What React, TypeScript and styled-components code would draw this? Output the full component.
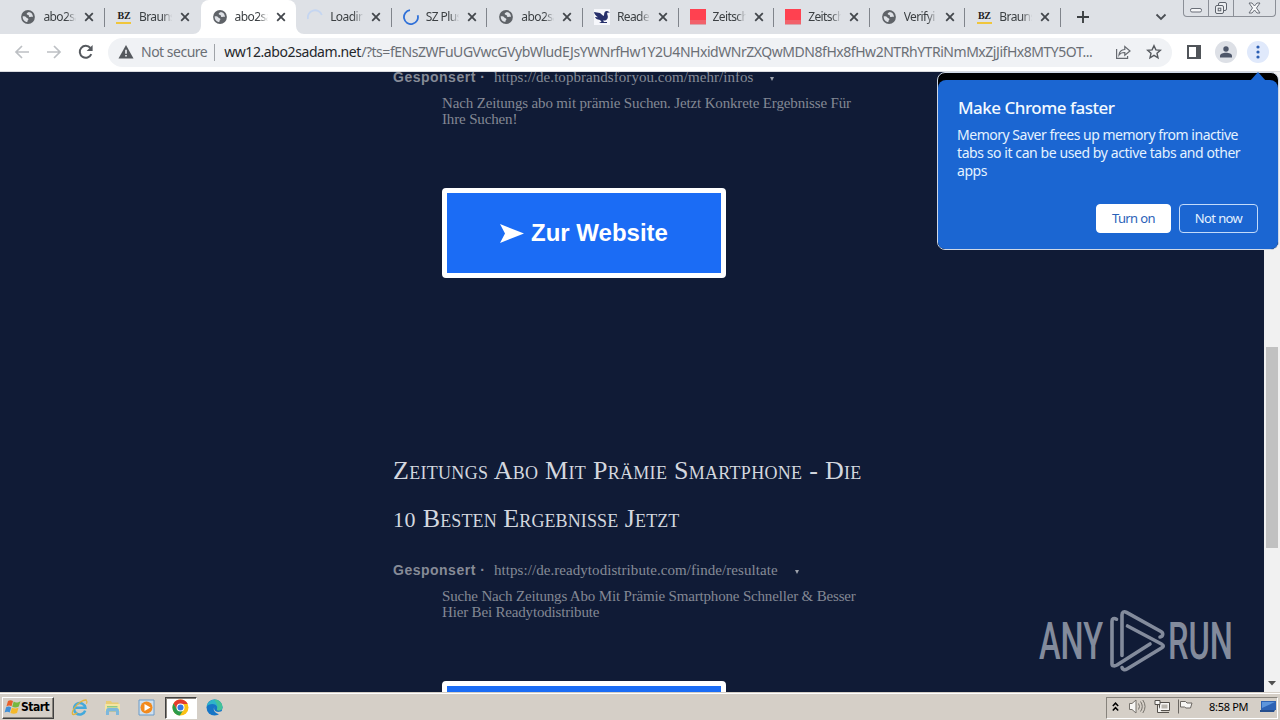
import React from 'react';
import styled, { createGlobalStyle } from 'styled-components';

const GlobalStyle = createGlobalStyle`
  *, *::before, *::after { box-sizing: border-box; }
  body { margin: 0; overflow: hidden; font-family: "Noto Sans", "Open Sans", sans-serif; }
  svg { display: block; flex: none; }
`;

const ui = '"Noto Sans", "Open Sans", sans-serif';
const slab = '"Liberation Serif", "DejaVu Serif", serif';

const Desktop = styled.div`
  width: 1280px;
  height: 720px;
  display: flex;
  flex-direction: column;
  overflow: hidden;
  position: relative;
  background: #101b36;
`;

/* ---------- tab strip ---------- */
const TabStrip = styled.div`
  height: 34px;
  flex: none;
  display: flex;
  align-items: stretch;
  background: #dee1e6;
  padding-left: 9.4px;
`;
const Tab = styled.div<{ $active?: boolean; $line: boolean }>`
  width: 95.6px;
  flex: none;
  display: flex;
  align-items: center;
  padding-left: 11px;
  position: relative;
  background: ${p => (p.$active ? '#fff' : 'transparent')};
  border-radius: 8px 8px 0 0;
  &::after {
    content: '';
    display: ${p => (p.$line ? 'block' : 'none')};
    position: absolute;
    right: 0;
    top: 8px;
    width: 1px;
    height: 19px;
    background: #80848b;
  }
`;
const TabFlare = styled.svg<{ $side: 'left' | 'right' }>`
  position: absolute;
  bottom: 0;
  ${p => p.$side}: -8px;
`;
const TabIcon = styled.span`
  width: 16px;
  height: 16px;
  flex: none;
  display: grid;
  place-items: center;
`;
const TabTitle = styled.span`
  width: 34px;
  margin-left: 7px;
  white-space: nowrap;
  font: 12px/18px ${ui};
  letter-spacing: -0.6px;
  color: #3c4043;
  mask-image: linear-gradient(90deg, #000 68%, transparent 98%);
`;
const TabClose = styled.svg`
  margin-left: 7px;
`;
const BzMark = styled.span`
  width: 15px;
  height: 14px;
  font: bold 10px/11px "Liberation Serif", serif;
  letter-spacing: -0.3px;
  color: #222;
  border-bottom: 2px solid #f0c63c;
  text-align: center;
`;
const RedMark = styled.span`
  width: 16px;
  height: 16px;
  background: linear-gradient(#ff4150 75%, #f2616a 75%);
  border-bottom: 1px solid #d7a6ad;
`;
const NewTab = styled.div`
  width: 44px;
  display: grid;
  place-items: center;
`;
const StripEnd = styled.div`
  flex: 1;
  display: flex;
  justify-content: flex-end;
  align-items: center;
  padding-right: 4px;
`;
const WindowControls = styled.div`
  align-self: flex-start;
  display: flex;
  height: 17px;
  margin-left: 16px;
  border: 1px solid #8b8f97;
  border-top: 0;
  border-radius: 0 0 4px 4px;
`;
const WindowButton = styled.span<{ $w: number }>`
  width: ${p => p.$w}px;
  display: grid;
  place-items: center;
  & + & { border-left: 1px solid #8b8f97; }
`;

/* ---------- toolbar ---------- */
const Toolbar = styled.div`
  height: 38px;
  flex: none;
  display: flex;
  align-items: center;
  background: #fff;
  border-bottom: 1px solid #d9dbdf;
  padding: 0 10px 1px 12px;
`;
const NavButton = styled.span`
  width: 20px;
  height: 20px;
  margin-right: 12px;
  display: grid;
  place-items: center;
`;
const Omnibox = styled.div`
  width: 1064px;
  height: 29px;
  flex: none;
  display: flex;
  align-items: center;
  border-radius: 15px;
  background: #f0f2f5;
  padding: 0 9px 0 10px;
`;
const Security = styled.span`
  width: 67px;
  margin-left: 7px;
  white-space: nowrap;
  font: 14px/22px ${ui};
  letter-spacing: -0.5px;
  color: #6b6f75;
`;
const OmniDivider = styled.span`
  width: 1px;
  height: 17px;
  margin: 0 9px 0 7px;
  background: #9fa3a8;
`;
const Host = styled.span`
  width: 137px;
  flex: none;
  white-space: nowrap;
  font: 14px/22px ${ui};
  letter-spacing: -0.41px;
  color: #25282c;
`;
const Path = styled.span`
  width: 740px;
  flex: none;
  white-space: nowrap;
  font: 14px/22px ${ui};
  letter-spacing: -0.46px;
  color: #6b6f75;
`;
const OmniAction = styled.span`
  width: 20px;
  margin-left: 12px;
  display: grid;
  place-items: center;
`;
const RoundAction = styled.span<{ $bg: string; $gap: number }>`
  width: 22px;
  height: 22px;
  flex: none;
  margin-left: ${p => p.$gap}px;
  border-radius: 50%;
  background: ${p => p.$bg};
  display: grid;
  place-items: center;
`;

/* ---------- web page ---------- */
const Viewport = styled.div`
  height: 620px;
  flex: none;
  display: flex;
  overflow: hidden;
  background: #101b36;
`;
const Page = styled.main`
  flex: 1;
  overflow: hidden;
  padding-left: 393px;
`;
const Ad = styled.article`
  width: 500px;
`;
const AdTitle = styled.h2`
  margin: 0;
  font: 400 26px/48px ${slab};
  font-variant: small-caps;
  letter-spacing: 0.3px;
  color: #d3d7df;
  white-space: nowrap;
`;
const TitleTail = styled.span`
  letter-spacing: 0.1px;
`;
const OldStyleFigures = styled.span`
  font-size: 22px;
  line-height: 1;
  letter-spacing: 0.6px;
`;
const AdMeta = styled.div`
  display: flex;
  align-items: center;
  height: 20px;
  color: #868b97;
  white-space: nowrap;
`;
const Sponsored = styled.span`
  width: 101px;
  font: bold 14px/20px "Liberation Sans", sans-serif;
  letter-spacing: 0.5px;
`;
const AdUrl = styled.span<{ $w: number; $s: number }>`
  width: ${p => p.$w}px;
  font: 15px/20px ${slab};
  letter-spacing: ${p => p.$s}px;
`;
const Caret = styled.span`
  margin: 4px 0 0 17px;
  border: 2.5px solid transparent;
  border-top: 4px solid #9da2ac;
  border-bottom: 0;
`;
const AdText = styled.p<{ $s: number }>`
  margin: 8px 0 0 49px;
  font: 15px/16px ${slab};
  letter-spacing: ${p => p.$s}px;
  color: #838894;
  white-space: nowrap;
`;
const VisitButton = styled.div`
  width: 284px;
  height: 90px;
  margin: 61px 0 0 49px;
  border: 5px solid #fff;
  border-radius: 4px;
  background: #1b6cf5;
  display: flex;
  align-items: center;
  justify-content: center;
  gap: 7px;
  font: bold 24px/30px "Liberation Sans", sans-serif;
  color: #fff;
  white-space: nowrap;
`;
const Scrollbar = styled.div`
  width: 16px;
  flex: none;
  display: flex;
  flex-direction: column;
  align-items: center;
  justify-content: space-between;
  background: #f1f1f1;
  padding: 275px 0 6px;
`;
const Thumb = styled.div`
  width: 12px;
  height: 201px;
  background: #c1c1c1;
`;

/* ---------- bubble ---------- */
const Bubble = styled.aside`
  position: absolute;
  left: 937px;
  top: 72px;
  width: 342px;
  height: 178px;
  padding-top: 7px;
  background: #000;
  border: 1px solid #cfd8e6;
  border-radius: 8px;
`;
const BubbleTip = styled.svg`
  position: absolute;
  right: 12px;
  top: -1px;
`;
const BubbleBody = styled.div`
  height: 169px;
  border-radius: 8px 8px 7px 7px;
  background: #1b66d2;
  padding: 16px 20px 0 19px;
  color: #e4f2ff;
`;
const BubbleTitle = styled.div`
  font: 500 17px/24px ${ui};
  letter-spacing: -0.5px;
  margin-left: 1px;
  color: #f4faff;
  white-space: nowrap;
`;
const BubbleText = styled.div`
  margin-top: 6px;
  font: 14px/18px ${ui};
  letter-spacing: -0.42px;
  white-space: nowrap;
`;
const FirstLine = styled.span`
  letter-spacing: -0.48px;
`;
const BubbleActions = styled.div`
  display: flex;
  justify-content: flex-end;
  gap: 8px;
  margin-top: 24px;
`;
const BubbleButton = styled.span<{ $primary?: boolean }>`
  width: ${p => (p.$primary ? 75 : 79)}px;
  height: 29px;
  border-radius: 4px;
  border: 1px solid ${p => (p.$primary ? '#fff' : '#c3dbfa')};
  background: ${p => (p.$primary ? '#fff' : 'transparent')};
  color: ${p => (p.$primary ? '#2b62b8' : '#e4f2ff')};
  font: 13px/27px ${ui};
  letter-spacing: -0.6px;
  text-align: center;
`;
const Watermark = styled.svg`
  position: absolute;
  left: 1036px;
  top: 606px;
`;

/* ---------- taskbar ---------- */
const Taskbar = styled.footer`
  height: 28px;
  flex: none;
  display: flex;
  align-items: center;
  background: #d5cfc7;
  border-top: 1px solid #d5cfc7;
  box-shadow: inset 0 1px 0 #fff;
  padding: 2px 2px 0;
`;
const StartButton = styled.div`
  width: 52px;
  height: 22px;
  display: flex;
  align-items: center;
  border: 1px solid;
  border-color: #fff #404040 #404040 #fff;
  box-shadow: inset -1px -1px 0 #87837c;
  font: bold 12px/18px "DejaVu Sans Condensed", "DejaVu Sans", sans-serif;
  letter-spacing: -0.5px;
  color: #000;
  padding: 0 0 2px 1px;
`;
const Launcher = styled.div`
  display: flex;
  align-items: center;
  margin-left: 9px;
`;
const LaunchItem = styled.span<{ $pressed?: boolean }>`
  width: 32px;
  height: 22px;
  margin-right: 1.9px;
  display: grid;
  place-items: center;
  background: ${p => (p.$pressed ? '#fff' : 'transparent')};
  border: 1px solid transparent;
  ${p => p.$pressed && 'border-color: #404040 #fff #fff #404040; box-shadow: inset 1px 1px 0 #87837c;'}
`;
const Tray = styled.div`
  width: 172px;
  height: 22px;
  margin-left: auto;
  display: flex;
  align-items: center;
  border: 1px solid;
  border-color: #87837c #fff #fff #87837c;
  padding: 0 0 2px 5px;
`;
const TrayItem = styled.span<{ $w: number }>`
  width: ${p => p.$w}px;
  flex: none;
`;
const Clock = styled.span`
  width: 51px;
  flex: none;
  font: 11px/18px "Noto Sans", sans-serif;
  letter-spacing: -0.3px;
  color: #000;
  white-space: nowrap;
`;

/* ---------- icons ---------- */
const Globe = () => (
  <svg width="14" height="14" viewBox="0 0 14 14">
    <circle cx="7" cy="7" r="6.9" fill="#5f6368" />
    <path d="M1.700 6.300c1.300-.3 3.300.2 3.700 1.300.4 1 1.800.3 2 1.600.1.900-1.200 1-1 2.900C3.500 11.900 1.500 9.500 1.700 6.300zM7.700 1.900c-.5.9-2.200.7-2 2 .1 1 1.500.5 2 1.300.6 1-.3 1.500 1 1.800 1.300.2 1.800-.4 3.300-.1C12 4.300 10.300 2.100 7.700 1.900z" fill="#dee1e6" />
  </svg>
);
const Spinner = ({ color, faint }: { color: string; faint?: boolean }) => (
  <svg width="16" height="16" viewBox="0 0 16 16">
    <path d={faint ? 'M1 10A7.200 7.200 0 0 1 14.800 6' : 'M7 1.200A7 7 0 1 0 14.700 6.200'} fill="none" stroke={color} strokeWidth="1.8" />
  </svg>
);
const Bird = () => (
  <svg width="16" height="16" viewBox="0 0 16 16">
    <path d="M0 0h16v16H0z" fill="#f6f7fb" />
    <path d="M0 3l6 1 3.500 3c1-1 .3-3 1.500-4.300 1-1.200 3-1 4.800.8l-2.500.3c-.8 1.200 1.400 3.300.2 5.600-1 1.800-2.500 2.300-4.500 2.100l1 1.500H13v1H5l2.500-1.200L6 11C3 10.500 1.500 9.500 1 8l3 .3C2 7 .5 5.500 0 3z" fill="#27306b" />
  </svg>
);
const StartFlag = () => (
  <svg width="17" height="16" viewBox="0 0 17 16">
    <path d="M4 2c1.800-1.200 3.500-1 5 .1L7.500 7.300C6 6.400 4.300 6.300 2.400 7.400z" fill="#e8602a" />
    <path d="M9.700 2.600c2 1.200 4 1.200 6.800-.4l-1.700 5.300c-2.200 1.200-4.500 1.100-6.600.2z" fill="#76b83f" />
    <path d="M2.100 8.300c1.900-1 3.500-.9 5.100.1l-1.500 5.100c-1.600-1-3.300-1-5.100 0z" fill="#3f8fd8" />
    <path d="M7.900 8.700c2.100 1 4.300 1.100 6.600 0L13 14c-2.300 1-4.600.9-6.600-.1z" fill="#f5b92b" />
  </svg>
);
const Explorer = () => (
  <svg width="17" height="17" viewBox="0 0 17 17">
    <path d="M14.200 11.600A5.700 5.700 0 1 1 14.400 8.800H4.500" fill="none" stroke="#43a9dc" strokeWidth="2.500" />
    <path d="M15.700 1.200C13 .2 6.800 3.500 3 9.500c-2 3.300-2.200 5.800-.7 6 1.200.1 2.700-.7 4-1.700" fill="none" stroke="#e2b53e" strokeWidth="1.300" />
    <path d="M14.500 1.200c1.800.4 1.700 2 .9 3.600" fill="none" stroke="#e2b53e" strokeWidth="1.100" />
  </svg>
);
const Folder = () => (
  <svg width="17" height="17" viewBox="0 0 17 17">
    <path d="M2 2h5l1 1.500h6.500V13H2z" fill="#e9cc73" />
    <path d="M1 5h15v7H1z" fill="#f5e4a2" />
    <path d="M3 7h10.500v1.500H3z" fill="#8ecb88" />
    <path d="M2 16v-4.500C2 9.600 3.400 9 5 9h7c1.600 0 3 .6 3 2.500V16h-3v-3.500H5V16z" fill="#7db8dc" />
  </svg>
);
const MediaPlayer = () => (
  <svg width="17" height="17" viewBox="0 0 17 17">
    <path d="M1 1h15v15H1z" fill="#cfe0ef" stroke="#6b9bc8" />
    <circle cx="8.500" cy="8.500" r="6" fill="#f28a1d" />
    <path d="M6.500 5l6 3.500-6 3.500z" fill="#fff" />
  </svg>
);
const ChromeIcon = () => (
  <svg width="17" height="17" viewBox="0 0 17 17">
    <circle cx="8.500" cy="8.500" r="8" fill="#fbc116" />
    <path d="M8.500.5a8 8 0 0 0-7 4l3.600 6.300L8.500 5h7.200A8 8 0 0 0 8.500.5z" fill="#e33b2e" />
    <path d="M1.500 4.500a8 8 0 0 0 6.400 12l3.700-6H5.100z" fill="#2c9b4b" />
    <circle cx="8.500" cy="8.500" r="4" fill="#fff" />
    <circle cx="8.500" cy="8.500" r="3" fill="#3477e4" />
  </svg>
);
const EdgeIcon = () => (
  <svg width="17" height="17" viewBox="0 0 17 17">
    <circle cx="8.500" cy="8.500" r="8" fill="#1675c6" />
    <path d="M.6 7.500A8 8 0 0 1 16.500 8c0 2.400-1.500 3.500-3.500 3.500-1.700 0-2.500-.6-2-1.500C12 8 10 5 6.500 5 3.700 5 1.500 6 .6 7.500z" fill="#2fb4c9" />
    <path d="M8 .5c5 0 8.500 3.400 8.500 7.500 0 2.400-1.500 3.500-3.500 3.500-1.700 0-2.500-.6-2-1.500 1.500-3-.5-6-3-9.500z" fill="#4bc884" opacity=".7" />
    <path d="M8.500 7.500c-1.500 3 1 6 5 5.300l2.500-.5 1-.8v3l-2 .5C10.500 15.500 6 12 8.500 7.500z" fill="#d5cfc7" />
  </svg>
);

type Fav = 'globe' | 'bz' | 'faint' | 'spin' | 'bird' | 'red';
const tabs: { icon: Fav; title: string }[] = [
  { icon: 'globe', title: 'abo2sa' },
  { icon: 'bz', title: 'Brauns' },
  { icon: 'globe', title: 'abo2sa' },
  { icon: 'faint', title: 'Loadin' },
  { icon: 'spin', title: 'SZ Plus' },
  { icon: 'globe', title: 'abo2sa' },
  { icon: 'bird', title: 'Reader' },
  { icon: 'red', title: 'Zeitsch' },
  { icon: 'red', title: 'Zeitsch' },
  { icon: 'globe', title: 'Verifyi' },
  { icon: 'bz', title: 'Brauns' },
];

const Favicon = ({ kind }: { kind: Fav }) => {
  if (kind === 'globe') return <Globe />;
  if (kind === 'bz') return <BzMark>BZ</BzMark>;
  if (kind === 'faint') return <Spinner color="#c5d6f1" faint />;
  if (kind === 'spin') return <Spinner color="#2f70d8" />;
  if (kind === 'bird') return <Bird />;
  return <RedMark />;
};

const AdBlock = ({ url, w, s, lines, ts }: { url: string; w: number; s: number; lines: string[]; ts: number }) => (
  <>
    <AdMeta>
      <Sponsored>Gesponsert ·</Sponsored>
      <AdUrl $w={w} $s={s}>{url}</AdUrl>
      <Caret />
    </AdMeta>
    <AdText $s={ts}>{lines[0]}<br />{lines[1]}</AdText>
    <VisitButton>
      <svg width="24" height="19" viewBox="0 0 24 19"><path d="M0 0L24 9.500 0 19l5-9.500z" fill="#fff" /></svg>
      Zur Website
    </VisitButton>
  </>
);

const FirstAd = styled(Ad)`
  margin-top: -5px;
`;
const SecondAd = styled(Ad)`
  margin-top: 169px;
  & > h2 { margin-bottom: 17px; }
`;

export default function App() {
  return (
    <Desktop>
      <GlobalStyle />
      <TabStrip>
        {tabs.map((t, i) => (
          <Tab key={i} $active={i === 2} $line={i !== 1 && i !== 2}>
            {i === 2 && (
              <>
                <TabFlare $side="left" width="8" height="8"><path d="M8 0v8H0a8 8 0 0 0 8-8z" fill="#fff" /></TabFlare>
                <TabFlare $side="right" width="8" height="8"><path d="M0 0v8h8a8 8 0 0 1-8-8z" fill="#fff" /></TabFlare>
              </>
            )}
            <TabIcon><Favicon kind={t.icon} /></TabIcon>
            <TabTitle>{t.title}</TabTitle>
            <TabClose width="10" height="10" viewBox="0 0 10 10"><path d="M1.200 1.200l7.600 7.600M8.800 1.200L1.200 8.800" stroke="#43474c" strokeWidth="1.800" /></TabClose>
          </Tab>
        ))}
        <NewTab>
          <svg width="12" height="12" viewBox="0 0 12 12"><path d="M6 0v12M0 6h12" stroke="#3c4043" strokeWidth="1.900" /></svg>
        </NewTab>
        <StripEnd>
          <svg width="12" height="8" viewBox="0 0 12 8"><path d="M1.500 1.500L6 6l4.500-4.500" fill="none" stroke="#4a4e54" strokeWidth="1.800" /></svg>
          <WindowControls>
            <WindowButton $w={24}>
              <svg width="12" height="16"><rect x=".5" y="8.500" width="11" height="3.500" rx="1.500" fill="#f5f6f8" stroke="#6a6f78" /></svg>
            </WindowButton>
            <WindowButton $w={25}>
              <svg width="14" height="16" viewBox="0 0 14 16" fill="#eceef1" stroke="#5e636c"><rect x="4.500" y="2.500" width="8" height="8" rx="1.500" /><rect x="1.500" y="5.500" width="8" height="8" rx="1.500" /><rect x="4.200" y="8.200" width="2.600" height="2.600" /></svg>
            </WindowButton>
            <WindowButton $w={42}>
              <svg width="13" height="16" viewBox="0 0 13 16"><path d="M1 3h3l2.500 3L9 3h3L8.500 8l3.500 5H9l-2.500-3L4 13H1l3.500-5z" fill="#f5f6f8" stroke="#6a6f78" /></svg>
            </WindowButton>
          </WindowControls>
        </StripEnd>
      </TabStrip>

      <Toolbar>
        <NavButton><svg width="16" height="14" viewBox="0 0 16 14" fill="none" stroke="#bdc0c4" strokeWidth="1.700"><path d="M15 7H2M8 1L2 7l6 6" /></svg></NavButton>
        <NavButton><svg width="16" height="14" viewBox="0 0 16 14" fill="none" stroke="#bdc0c4" strokeWidth="1.700"><path d="M1 7h13M8 1l6 6-6 6" /></svg></NavButton>
        <NavButton><svg width="16" height="16" viewBox="0 0 16 16"><path d="M13.300 10.200A6 6 0 1 1 12.400 4" fill="none" stroke="#55595e" strokeWidth="2" /><path d="M14.600 1v6H8.600z" fill="#55595e" /></svg></NavButton>
        <Omnibox>
          <svg width="16" height="14" viewBox="0 0 16 14"><path d="M8 0l7.500 13.500H.5z" fill="#55595e" /><path d="M7.200 4.800h1.600v4H7.200zM7.200 10h1.600v1.600H7.200z" fill="#f0f2f5" /></svg>
          <Security>Not secure</Security>
          <OmniDivider />
          <Host>ww12.abo2sadam.net</Host>
          <Path>/?ts=fENsZWFuUGVwcGVybWludEJsYWNrfHw1Y2U4NHxidWNrZXQwMDN8fHx8fHw2NTRhYTRiNmMxZjJifHx8MTY5OT...</Path>
          <OmniAction><svg width="16" height="16" viewBox="0 0 16 16" fill="none" stroke="#666a70" strokeWidth="1.200"><path d="M1.600 5v9.400h11V12M4 11c.3-3.700 2.300-5.300 5.800-5.500V2.600L15 7l-5.200 4.300V8.500C7 8.400 5.200 9.200 4 11z" /></svg></OmniAction>
          <OmniAction><svg width="16" height="16" viewBox="0 0 16 16"><path d="M8 1.700l1.900 4.200 4.500.4-3.400 3 1 4.500L8 11.400l-4 2.400 1-4.500-3.400-3 4.500-.4z" fill="none" stroke="#55595e" strokeWidth="1.400" /></svg></OmniAction>
        </Omnibox>
        <RoundAction $bg="transparent" $gap={11}><svg width="14" height="14" viewBox="0 0 14 14"><path d="M0 0h14v14H0z" fill="#505459" /><path d="M2 2h7v10H2z" fill="#fff" /></svg></RoundAction>
        <RoundAction $bg="#dde0e6" $gap={10}><svg width="12" height="12" viewBox="0 0 12 12" fill="#4d5669"><circle cx="6" cy="3" r="2.700" /><path d="M0 11.500V10c0-2 3-3.200 6-3.200s6 1.200 6 3.200v1.500z" /></svg></RoundAction>
        <RoundAction $bg="#e0e9fb" $gap={10}><svg width="4" height="14" viewBox="0 0 4 14" fill="#2c5fb3"><circle cx="2" cy="2" r="1.600" /><circle cx="2" cy="7" r="1.600" /><circle cx="2" cy="12" r="1.600" /></svg></RoundAction>
      </Toolbar>

      <Viewport>
        <Page>
          <FirstAd>
            <AdBlock url="https://de.topbrandsforyou.com/mehr/infos" w={259} s={0.05} ts={-0.15} lines={['Nach Zeitungs abo mit prämie Suchen. Jetzt Konkrete Ergebnisse Für', 'Ihre Suchen!']} />
          </FirstAd>
          <SecondAd>
            <AdTitle>
              Zeitungs Abo Mit Prämie Smartphone - Die<br />
              <OldStyleFigures>10</OldStyleFigures><TitleTail> Besten Ergebnisse Jetzt</TitleTail>
            </AdTitle>
            <AdBlock url="https://de.readytodistribute.com/finde/resultate" w={284} s={0.06} ts={-0.17} lines={['Suche Nach Zeitungs Abo Mit Prämie Smartphone Schneller & Besser', 'Hier Bei Readytodistribute']} />
          </SecondAd>
        </Page>
        <Scrollbar>
          <Thumb />
          <svg width="8" height="5" viewBox="0 0 8 5"><path d="M0 0h8L4 4.500z" fill="#505050" /></svg>
        </Scrollbar>
      </Viewport>

      <Taskbar>
        <StartButton><StartFlag />Start</StartButton>
        <Launcher>
          <LaunchItem><Explorer /></LaunchItem>
          <LaunchItem><Folder /></LaunchItem>
          <LaunchItem><MediaPlayer /></LaunchItem>
          <LaunchItem $pressed><ChromeIcon /></LaunchItem>
          <LaunchItem><EdgeIcon /></LaunchItem>
        </Launcher>
        <Tray>
          <TrayItem $w={17}><svg width="7" height="10" viewBox="0 0 7 10" fill="none" stroke="#000" strokeWidth="1.500"><path d="M.8 4l2.700-2.800L6.200 4M.8 8.500l2.700-2.800 2.700 2.800" /></svg></TrayItem>
          <TrayItem $w={25}><svg width="17" height="15" viewBox="0 0 17 15" fill="#f7f6f4" stroke="#77736d"><path d="M.5 4.500H3L7 1v13L3 10.500H.5z" /><path d="M9.500 4.500q2 3 0 6M11.500 2.500q3.500 5 0 10M13.800 1q4.500 6.500 0 13" fill="none" /></svg></TrayItem>
          <TrayItem $w={23}><svg width="17" height="15" viewBox="0 0 17 15" fill="#f7f6f4" stroke="#55514c"><path d="M5.500 3.500h10v8h-10z" /><path d="M7.500 5.500h6v4h-6z" fill="#b9b5ae" stroke="none" /><path d="M7 13.500h8M1 1.500h5v4H1zM3.500 5.500v8H8" /></svg></TrayItem>
          <TrayItem $w={32}><svg width="17" height="15" viewBox="0 0 17 15" fill="#f7f6f4" stroke="#6b6762"><path d="M1.500.5v14M3.500 2.500h5l1.500 1.500h5l-1.500 5H9L7.500 8h-4z" /></svg></TrayItem>
          <Clock>8:58 PM</Clock>
          <svg width="16" height="13" viewBox="0 0 16 13"><path d="M1 1h15v9H1z" fill="#2d62b4" /><path d="M2 2h13L2 8z" fill="#5d95dc" /><path d="M0 10h15l-1 2H0z" fill="#244d8c" /></svg>
        </Tray>
      </Taskbar>

      <Bubble>
        <BubbleTip width="16" height="9" viewBox="0 0 16 9"><path d="M0 9l8-9 8 9z" fill="#1b66d2" /></BubbleTip>
        <BubbleBody>
          <BubbleTitle>Make Chrome faster</BubbleTitle>
          <BubbleText><FirstLine>Memory Saver frees up memory from inactive</FirstLine><br />tabs so it can be used by active tabs and other<br />apps</BubbleText>
          <BubbleActions>
            <BubbleButton $primary>Turn on</BubbleButton>
            <BubbleButton>Not now</BubbleButton>
          </BubbleActions>
        </BubbleBody>
      </Bubble>

      <Watermark width="200" height="70" viewBox="0 0 200 70" fill="#838b9c" fontFamily="Roboto, sans-serif" fontWeight="500" fontSize="52">
        <text x="3" y="53" textLength="64" lengthAdjust="spacingAndGlyphs">ANY</text>
        <text x="132" y="53" textLength="65" lengthAdjust="spacingAndGlyphs">RUN</text>
        <g fill="none" stroke="#838b9c" strokeWidth="3.600" strokeLinejoin="round" strokeLinecap="round">
          <path d="M80.500 13.200c-2.500-1.500-4.500-.5-4.500 2V58c0 2 2.500 2.500 5 1L114 38" />
          <path d="M86 49.500V9c0-3 2-4 4.500-2.600L125 25.500c2.500 1.500 2.300 5-1 5.500" />
          <path d="M91.500 20L125.500 38c2.500 1.300 2.300 2.700 0 4L91 63c-2.500 1.500-4.500.5-5-1.500" />
        </g>
      </Watermark>
    </Desktop>
  );
}
